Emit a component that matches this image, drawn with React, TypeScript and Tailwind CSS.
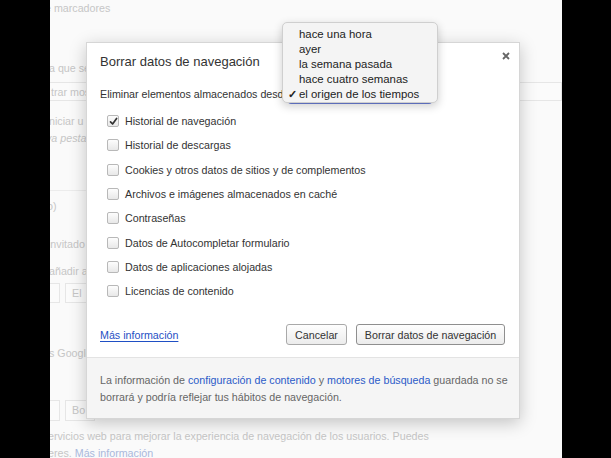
import React from 'react';

const FONT = { fontFamily: '"Liberation Sans", Arial, sans-serif' };

const ITEMS = [
  { label: 'Historial de navegación', checked: true },
  { label: 'Historial de descargas', checked: false },
  { label: 'Cookies y otros datos de sitios y de complementos', checked: false },
  { label: 'Archivos e imágenes almacenados en caché', checked: false },
  { label: 'Contraseñas', checked: false },
  { label: 'Datos de Autocompletar formulario', checked: false },
  { label: 'Datos de aplicaciones alojadas', checked: false },
  { label: 'Licencias de contenido', checked: false },
];

const RANGES = ['hace una hora', 'ayer', 'la semana pasada', 'hace cuatro semanas', 'el origen de los tiempos'];

function Checkbox({ checked }: { checked: boolean }) {
  return (
    <span className="w-[12px] h-[12px] rounded-[2px] border border-[#b8b8b8] bg-gradient-to-b from-[#fdfdfd] to-[#e8e8e8] flex items-center justify-center shrink-0">
      {checked && (
        <svg width="9" height="9" viewBox="0 0 9 9">
          <path d="M1.5 4.8 L3.6 7 L7.6 1.5" fill="none" stroke="#333" strokeWidth="1.7" strokeLinecap="round" strokeLinejoin="round" />
        </svg>
      )}
    </span>
  );
}

function Background() {
  // faded settings page behind the overlay
  return (
    <div className="flex flex-col text-[10.7px] leading-[16px] text-[#c6c6c6] whitespace-nowrap">
      <div className="-ml-[5px]">e marcadores</div>
      <div className="mt-[44px] -ml-[1px]">a que se</div>
      <div className="mt-[6px] h-[19px] border border-[#e6e6e6] bg-[#fbfbfb] flex items-center -ml-[1px] pl-[1px]">trar mostrar</div>
      <div className="mt-[12px] -ml-[1px]">niciar u</div>
      <div className="mt-[1px] -ml-[4px] italic">va pestaña</div>
      <div className="mt-[44px] border-t border-[#ececec] w-[40px]" />
      <div className="mt-[7px] -ml-[3px]">o)</div>
      <div className="mt-[22px] -ml-[2px]">invitado</div>
      <div className="mt-[11px] -ml-[1px]">añadir a</div>
      <div className="mt-[4px] flex gap-[5px]">
        <span className="w-[10px] h-[20px] border border-[#e6e6e6] border-l-0 bg-[#fbfbfb]" />
        <span className="w-[30px] h-[20px] border border-[#e6e6e6] bg-[#fbfbfb] pl-[6px] leading-[18px]">El</span>
      </div>
      <div className="mt-[42px] -ml-[1px]">s Google</div>
      <div className="mt-[39px] flex gap-[5px]">
        <span className="w-[10px] h-[21px] border border-[#e6e6e6] border-l-0 bg-[#fbfbfb]" />
        <span className="w-[30px] h-[21px] border border-[#e6e6e6] bg-[#fbfbfb] pl-[6px] leading-[19px]">Bo</span>
      </div>
      <div className="mt-[7px] -ml-[2px]">ervicios web para mejorar la experiencia de navegación de los usuarios. Puedes</div>
      <div className="mt-[1px] -ml-[2px]">
        eres. <span className="text-[#a9b8dc]">Más información</span>
      </div>
    </div>
  );
}

function Dialog() {
  return (
    <div className="absolute left-[36px] top-[42px] w-[434px] h-[377px] bg-white border border-[#d6d6d6] shadow-[0_4px_16px_rgba(0,0,0,0.22)] flex flex-col text-[#333] text-[10.7px]">
      <div className="pl-[13px] pt-[9px] text-[13px] leading-[20px]">Borrar datos de navegación</div>
      <svg className="absolute right-[9px] top-[9px]" width="8" height="8" viewBox="0 0 8 8">
        <path d="M1 1 L7 7 M7 1 L1 7" stroke="#666" strokeWidth="1.8" />
      </svg>
      <div className="pl-[13px] mt-[14px] h-[16px] flex leading-[16px] whitespace-nowrap">
        <span>Eliminar elementos almacenados desde</span>
        <span className="-ml-[2px] w-[144px] h-[18px] border-b-[2px] border-[#6b7fd8] rounded-[3px]" />
      </div>
      <div className="mt-[7px] pl-[20px] flex flex-col">
        {ITEMS.map((it) => (
          <div key={it.label} className="h-[24.3px] flex items-center gap-[6px]">
            <Checkbox checked={it.checked} />
            <span>{it.label}</span>
          </div>
        ))}
      </div>
      <div className="mt-[21px] pl-[13px] pr-[14px] flex items-center">
        <a className="text-[#1f4fc4] underline underline-offset-2">Más información</a>
        <div className="ml-auto flex gap-[9px]">
          <button className="h-[21px] w-[61px] rounded-[3px] border border-[#a9a9a9] bg-gradient-to-b from-[#fefefe] to-[#ececec] text-[#333]">Cancelar</button>
          <button className="h-[21px] w-[149px] rounded-[3px] border border-[#8f8f8f] bg-gradient-to-b from-[#fefefe] to-[#ececec] text-[#333]">Borrar datos de navegación</button>
        </div>
      </div>
      <div className="mt-auto h-[61px] bg-[#f5f5f5] border-t border-[#e3e3e3] pl-[13px] pt-[14px] leading-[17px] text-[#666] whitespace-nowrap">
        <div>
          La información de <span className="text-[#2b5bc8]">configuración de contenido</span> y{' '}
          <span className="text-[#2b5bc8]">motores de búsqueda</span> guardada no se
        </div>
        <div>borrará y podría reflejar tus hábitos de navegación.</div>
      </div>
    </div>
  );
}

function RangeMenu() {
  return (
    <div className="absolute left-[232px] top-[22px] w-[156px] h-[81px] rounded-[5px] bg-[#f4f4f4] border border-[#cfcfcf] shadow-[0_3px_10px_rgba(0,0,0,0.2)] pt-[4px] text-[11.4px] leading-[15px] text-[#222] whitespace-nowrap">
      {RANGES.map((r, i) => (
        <div key={r} className="flex items-center">
          <span className="w-[16px] pl-[5px] text-[11px] font-bold">{i === RANGES.length - 1 ? '✓' : ''}</span>
          <span>{r}</span>
        </div>
      ))}
    </div>
  );
}

export default function App() {
  return (
    <div className="w-[611px] h-[458px] bg-black flex" style={FONT}>
      <div className="ml-[50px] w-[512px] h-full bg-[#fafafa] relative overflow-hidden">
        <Background />
        <Dialog />
        <RangeMenu />
      </div>
    </div>
  );
}
